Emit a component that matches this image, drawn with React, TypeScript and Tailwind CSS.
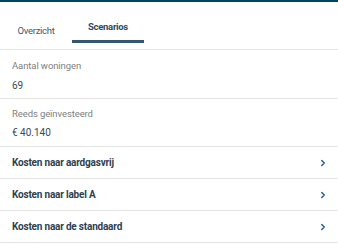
import { ChevronRight } from 'lucide-react';

const ROWS = ['Kosten naar aardgasvrij', 'Kosten naar label A', 'Kosten naar de standaard'];

export default function App() {
  return (
    <div className="w-[338px] h-[244px] bg-white overflow-hidden" style={{ fontFamily: 'Roboto, sans-serif' }}>
      <div className="h-[2px] bg-[#00465f]" />

      {/* Tabs */}
      <div className="flex h-[48px] border-b border-[#e3e3e3]">
        <button className="w-[72px] flex items-center justify-center pt-[12px] text-[9.5px] tracking-[-0.3px] text-[#3e5a72]">
          Overzicht
        </button>
        <button className="w-[72px] flex flex-col items-center justify-end">
          <span className="text-[9.5px] font-bold tracking-[-0.3px] text-[#2f4c63] mb-[6px]">Scenarios</span>
          <span className="w-full h-[3px] bg-[#33586f] mb-[6px]" />
        </button>
      </div>

      {/* Stats */}
      <div className="h-[49px] border-b border-[#e3e3e3] px-[12px] pt-[9px]">
        <p className="text-[9.5px] tracking-[-0.1px] text-[#808080] leading-[14px]">Aantal woningen</p>
        <p className="text-[10px] text-[#3b4a57] leading-[14px] mt-[6px]">69</p>
      </div>
      <div className="h-[48px] border-b border-[#e3e3e3] px-[12px] pt-[8px]">
        <p className="text-[9.5px] tracking-[-0.1px] text-[#808080] leading-[14px]">Reeds geïnvesteerd</p>
        <p className="text-[10px] text-[#3b4a57] leading-[14px] mt-[5px]">€ 40.140</p>
      </div>

      {/* Kosten */}
      {ROWS.map(r => (
        <div key={r} className="h-[32px] border-b border-[#e3e3e3] flex items-center justify-between pl-[12px] pr-[10px]">
          <span className="text-[10px] font-bold tracking-[-0.2px] text-[#2d3f51]">{r}</span>
          <ChevronRight size={10} strokeWidth={3.5} className="text-[#1d5f9e]" />
        </div>
      ))}
    </div>
  );
}
